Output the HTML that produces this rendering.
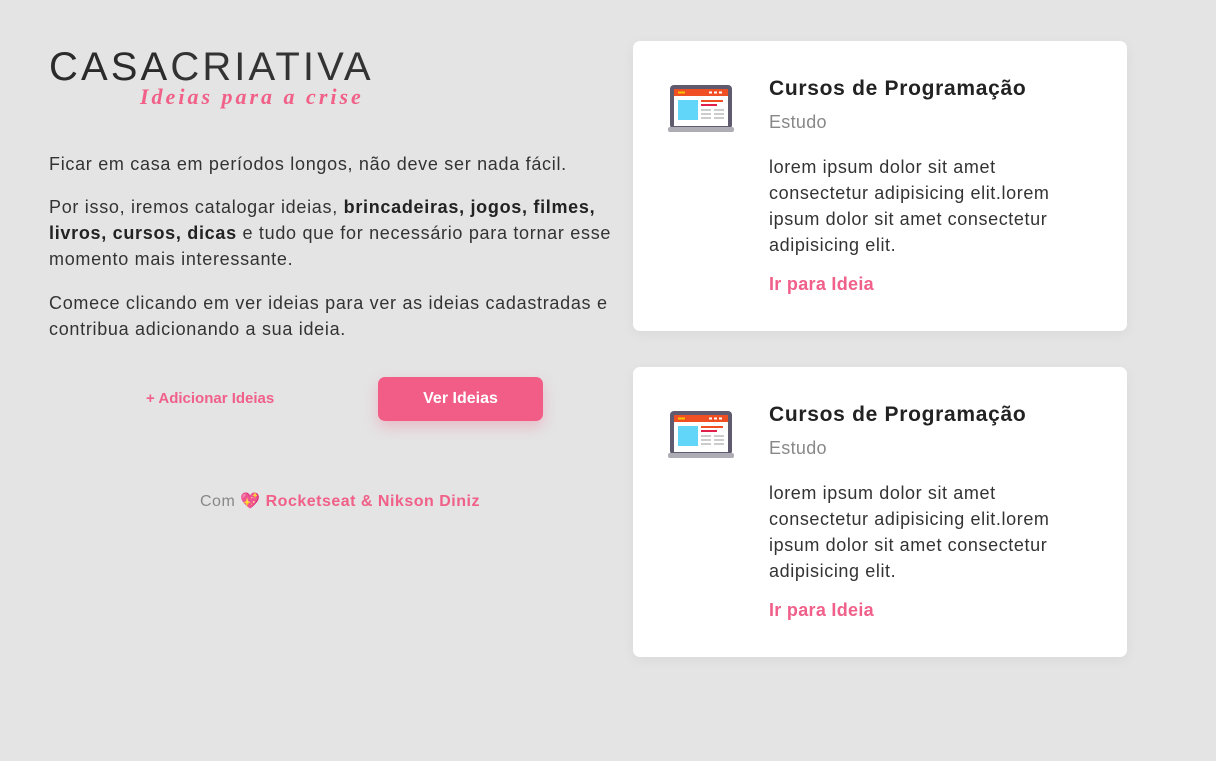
<!DOCTYPE html>
<html><head><meta charset="utf-8"><style>
*{margin:0;padding:0;box-sizing:border-box}
body{width:1216px;height:761px;background:#e4e4e4;font-family:"Liberation Sans",sans-serif;color:#333;position:relative;overflow:hidden}
.abs{position:absolute}
.logo1{left:49px;top:42px;font-size:40px;letter-spacing:3.1px;color:#2b2b2b;line-height:50px;font-weight:normal}
.logo2{left:140px;top:84px;font-family:"Liberation Serif",serif;font-style:italic;font-weight:bold;font-size:22px;color:#f06088;letter-spacing:3px}
p.t{position:absolute;left:49px;width:575px;font-size:18px;line-height:26px;letter-spacing:0.7px;color:#333}
p.t b{color:#222}
.card{position:absolute;left:633px;width:494px;height:290px;background:#fff;border-radius:7px;box-shadow:0 3px 12px rgba(0,0,0,.05)}
.card h3{position:absolute;left:136px;top:36px;font-size:21px;letter-spacing:0.7px;color:#222;font-weight:bold}
.card .c{position:absolute;left:136px;top:71px;font-size:18px;letter-spacing:0.3px;color:#888}
.card .d{position:absolute;left:136px;top:113px;width:315px;font-size:18px;line-height:26px;color:#333;letter-spacing:0.6px}
.card .l{position:absolute;left:136px;top:233px;font-size:18px;letter-spacing:0.3px;font-weight:bold;color:#f0608a}
.card svg{position:absolute;left:35px;top:44px}
</style></head><body>
<div class="abs logo1">CASA<span style="color:#333">CRIATIVA</span></div>
<div class="abs logo2">Ideias para a crise</div>
<p class="t" style="top:151px">Ficar em casa em períodos longos, não deve ser nada fácil.</p>
<p class="t" style="top:194px">Por isso, iremos catalogar ideias, <b>brincadeiras, jogos, filmes, livros, cursos, dicas</b> e tudo que for necessário para tornar esse momento mais interessante.</p>
<p class="t" style="top:290px">Comece clicando em ver ideias para ver as ideias cadastradas e contribua adicionando a sua ideia.</p>
<div class="abs" style="left:146px;top:390px;font-size:15px;font-weight:bold;color:#f0608a">+ Adicionar Ideias</div>
<div class="abs" style="left:378px;top:377px;width:165px;height:44px;background:#f25d87;border-radius:7px;color:#fff;font-weight:bold;font-size:16px;text-align:center;line-height:43px;box-shadow:0 6px 14px rgba(242,93,135,.3)">Ver Ideias</div>
<div class="abs" style="left:200px;top:491px;font-size:16px;letter-spacing:0.5px;color:#888">Com <span style="color:#f25d87">💖</span> <b style="color:#f06088">Rocketseat &amp; Nikson Diniz</b></div>
<div class="card" style="top:41px">
<svg width="66" height="48" viewBox="0 0 66 48"><rect x="2" y="0" width="62" height="44" rx="4" fill="#5f5a6e"/><rect x="6" y="4" width="54" height="37" fill="#fff"/><rect x="6" y="4" width="54" height="7" fill="#f04f24"/><rect x="10" y="6.5" width="7" height="2" fill="#f7c500"/><rect x="41" y="6.5" width="3" height="2" fill="#fff"/><rect x="46" y="6.5" width="3" height="2" fill="#fff"/><rect x="51" y="6.5" width="3" height="2" fill="#fff"/><rect x="10" y="15" width="20" height="20" fill="#62d6f8"/><rect x="33" y="15" width="22" height="2" fill="#f04f24"/><rect x="33" y="19" width="16" height="2" fill="#e0204a"/><rect x="33" y="24" width="10" height="2" fill="#ccc"/><rect x="46" y="24" width="10" height="2" fill="#ccc"/><rect x="33" y="28" width="10" height="2" fill="#ccc"/><rect x="46" y="28" width="10" height="2" fill="#ccc"/><rect x="33" y="32" width="10" height="2" fill="#ccc"/><rect x="46" y="32" width="10" height="2" fill="#ccc"/><rect x="0" y="42" width="66" height="5" rx="2" fill="#aeadb5"/></svg>
<h3>Cursos de Programação</h3><div class="c">Estudo</div>
<div class="d">lorem ipsum dolor sit amet consectetur adipisicing elit.lorem ipsum dolor sit amet consectetur adipisicing elit.</div>
<div class="l">Ir para Ideia</div></div>
<div class="card" style="top:367px">
<svg width="66" height="48" viewBox="0 0 66 48"><rect x="2" y="0" width="62" height="44" rx="4" fill="#5f5a6e"/><rect x="6" y="4" width="54" height="37" fill="#fff"/><rect x="6" y="4" width="54" height="7" fill="#f04f24"/><rect x="10" y="6.5" width="7" height="2" fill="#f7c500"/><rect x="41" y="6.5" width="3" height="2" fill="#fff"/><rect x="46" y="6.5" width="3" height="2" fill="#fff"/><rect x="51" y="6.5" width="3" height="2" fill="#fff"/><rect x="10" y="15" width="20" height="20" fill="#62d6f8"/><rect x="33" y="15" width="22" height="2" fill="#f04f24"/><rect x="33" y="19" width="16" height="2" fill="#e0204a"/><rect x="33" y="24" width="10" height="2" fill="#ccc"/><rect x="46" y="24" width="10" height="2" fill="#ccc"/><rect x="33" y="28" width="10" height="2" fill="#ccc"/><rect x="46" y="28" width="10" height="2" fill="#ccc"/><rect x="33" y="32" width="10" height="2" fill="#ccc"/><rect x="46" y="32" width="10" height="2" fill="#ccc"/><rect x="0" y="42" width="66" height="5" rx="2" fill="#aeadb5"/></svg>
<h3>Cursos de Programação</h3><div class="c">Estudo</div>
<div class="d">lorem ipsum dolor sit amet consectetur adipisicing elit.lorem ipsum dolor sit amet consectetur adipisicing elit.</div>
<div class="l">Ir para Ideia</div></div>
</body></html>
